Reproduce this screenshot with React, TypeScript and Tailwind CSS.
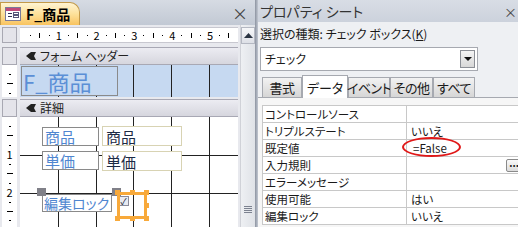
import React from "react";

const jp = "font-['Noto_Sans_CJK_JP','Noto_Sans',sans-serif] [font-feature-settings:'palt']";
const CM = 37.8;
const ORIGIN = 21;

function FormIcon() {
  return (
    <svg width="16" height="14" viewBox="0 0 16 14">
      <rect x="0.5" y="0.5" width="15" height="13" fill="#fff" stroke="#7a7a9a" />
      <rect x="1" y="1" width="14" height="3" fill="#c04a7a" />
      <line x1="3" y1="6.5" x2="7" y2="6.5" stroke="#335" />
      <line x1="3" y1="9.5" x2="7" y2="9.5" stroke="#335" />
      <rect x="8.5" y="5.5" width="5" height="2" fill="none" stroke="#557" />
      <rect x="8.5" y="8.5" width="5" height="2" fill="none" stroke="#557" />
    </svg>
  );
}

function BandIcon() {
  return (
    <svg width="12" height="10" viewBox="0 0 12 10">
      <path d="M1 5 L6 1 L11 1 L9 5 L11 9 L6 9 Z" fill="#222" />
    </svg>
  );
}

function HRuler() {
  const ticks = [];
  for (let i = 1; i < 24; i++) {
    const x = ORIGIN + i * (CM / 4) - 20;
    const q = i % 4;
    ticks.push(
      <div
        key={i}
        className="absolute top-0 flex h-full items-center justify-center"
        style={{ left: x - 6, width: 12 }}
      >
        {q === 0 ? (
          <span className="text-[11px] leading-none text-black">{i / 4}</span>
        ) : q === 2 ? (
          <span className="h-[5px] w-px bg-black" />
        ) : (
          <span className="h-px w-px bg-black" />
        )}
      </div>
    );
  }
  return <div className="relative h-full flex-1 overflow-hidden bg-white">{ticks}</div>;
}

function VTicks({ count }: { count: number }) {
  const marks = [];
  for (let i = 1; i <= count; i++) {
    const y = i * (CM / 4);
    const q = i % 4;
    marks.push(
      <div
        key={i}
        className="absolute left-0 flex w-full items-center justify-center"
        style={{ top: y - 6, height: 12 }}
      >
        {q === 0 ? (
          <span className="text-[11px] leading-none text-black">{i / 4}</span>
        ) : q === 2 ? (
          <span className="h-px w-[6px] bg-black" />
        ) : (
          <span className="h-px w-[2px] bg-black" />
        )}
      </div>
    );
  }
  return <>{marks}</>;
}

function Band({ label }: { label: string }) {
  return (
    <div className="flex h-[18px] items-center gap-[3px] border-y border-[#a8a8b4] bg-gradient-to-b from-[#ececf2] to-[#d6d6de] pl-[5px] text-[12px] leading-none text-[#222]">
      <BandIcon />
      <span>{label}</span>
    </div>
  );
}

function VGrid() {
  return (
    <>
      {[1, 2, 3, 4, 5].map((k) => (
        <div
          key={k}
          className="absolute top-0 h-full w-px bg-[#222]"
          style={{ left: Math.round(k * CM) }}
        />
      ))}
    </>
  );
}

function Handle({ x, y, cls }: { x: number; y: number; cls: string }) {
  return <div className={`absolute ${cls}`} style={{ left: x, top: y }} />;
}

function Designer() {
  return (
    <div className={`flex h-full w-[255px] flex-col bg-[#e8e9ee] ${jp}`}>
      {/* doc tab bar */}
      <div className="flex h-[25px] items-end bg-gradient-to-b from-[#d6dbe3] to-[#c2c9d4] pt-[2px]">
        <div className="flex h-[23px] w-[80px] items-center gap-[5px] rounded-tr-[10px] border border-b-0 border-[#c39a4a] bg-gradient-to-b from-[#fff4d2] via-[#fde19a] to-[#f8c35e] pl-[4px]">
          <FormIcon />
          <span className="text-[14px] font-bold leading-none text-black">F_商品</span>
        </div>
        <div className="flex-1" />
        <span className="mb-[4px] mr-[7px] text-[16px] leading-none text-[#444]">×</span>
      </div>
      <div className="flex min-h-0 flex-1">
        <div className="flex min-w-0 flex-1 flex-col pt-[2px]">
          {/* ruler row */}
          <div className="flex h-[17px] gap-[3px] pl-[2px]">
            <div className="h-[16px] w-[15px] border border-[#a8a8b2] bg-[#e4e4ea]" />
            <div className="h-[16px] flex-1 border-y border-[#c8c8d0]">
              <HRuler />
            </div>
          </div>
          <div className="flex min-h-0 flex-1 gap-[3px] pl-[2px] pt-[3px]">
            {/* vertical ruler */}
            <div className="flex w-[15px] flex-col">
              <div className="h-[18px] border border-[#a8a8b2] bg-[#e4e4ea]" />
              <div className="relative h-[32px] bg-white">
                <VTicks count={3} />
              </div>
              <div className="mt-[2px] h-[18px] border border-[#a8a8b2] bg-[#e4e4ea]" />
              <div className="relative flex-1 overflow-hidden bg-white">
                <VTicks count={11} />
              </div>
            </div>
            {/* canvas */}
            <div className="flex min-w-0 flex-1 flex-col">
              <Band label="フォーム ヘッダー" />
              <div className="relative h-[32px] bg-[#c6d9f1]">
                <VGrid />
                <div className="absolute left-[1px] top-[1px] flex h-[30px] w-[97px] items-center whitespace-nowrap border border-[#8a8a8a] bg-[#c6d9f1] pl-[1px] text-[22px] leading-[22px] text-[#5b8fd6]">
                  F_商品
                </div>
              </div>
              <div className="h-[2px]" />
              <Band label="詳細" />
              <div className="relative flex-1 overflow-hidden bg-white">
                <VGrid />
                <div className="absolute left-0 h-px w-full bg-[#222]" style={{ top: 38 }} />
                <div className="absolute left-0 h-px w-full bg-[#222]" style={{ top: 76 }} />
                {/* 商品 */}
                <div className="absolute left-[22px] top-[10px] flex h-[19px] w-[57px] items-center border border-[#8a8a8a] bg-white pl-[2px] text-[15px] leading-none text-[#4f86d0]">
                  商品
                </div>
                <div className="absolute left-[82px] top-[9px] flex h-[20px] w-[80px] items-center border border-[#d8d3b3] bg-white pl-[3px] text-[15px] leading-none text-[#1c2a44]">
                  商品
                </div>
                {/* 単価 */}
                <div className="absolute left-[22px] top-[34px] flex h-[19px] w-[57px] items-center border border-[#8a8a8a] bg-white pl-[2px] text-[15px] leading-none text-[#4f86d0]">
                  単価
                </div>
                <div className="absolute left-[82px] top-[34px] flex h-[20px] w-[80px] items-center border border-[#d8d3b3] bg-white pl-[3px] text-[15px] leading-none text-[#1c2a44]">
                  単価
                </div>
                {/* 編集ロック */}
                <div className="absolute left-[22px] top-[77px] flex h-[18px] w-[70px] items-center overflow-hidden whitespace-nowrap border border-[#8a8a8a] bg-white pl-[1px] text-[14px] leading-none text-[#4f86d0]">
                  編集ロック
                </div>
                <Handle x={17} y={71} cls="h-[8px] w-[9px] bg-[#808088]" />
                <Handle x={92} y={71} cls="h-[8px] w-[9px] bg-[#808088]" />
                <div className="absolute left-[98px] top-[79px] flex h-[10px] w-[11px] items-center justify-center border border-[#8a8a9a] bg-[#e8eaf2] text-[9px] leading-none text-[#223]">
                  ✓
                </div>
                <div className="absolute left-[97px] top-[75px] h-[27px] w-[30px] border-[3px] border-[#f8a93a]" />
                <Handle x={95} y={73} cls="h-[5px] w-[5px] bg-[#f8a93a]" />
                <Handle x={110} y={73} cls="h-[5px] w-[5px] bg-[#f8a93a]" />
                <Handle x={124} y={73} cls="h-[5px] w-[5px] bg-[#f8a93a]" />
                <Handle x={124} y={86} cls="h-[5px] w-[5px] bg-[#f8a93a]" />
                <Handle x={95} y={99} cls="h-[5px] w-[5px] bg-[#f8a93a]" />
                <Handle x={110} y={99} cls="h-[5px] w-[5px] bg-[#f8a93a]" />
                <Handle x={124} y={99} cls="h-[5px] w-[5px] bg-[#f8a93a]" />
              </div>
            </div>
          </div>
        </div>
        {/* scrollbar */}
        <div className="ml-[2px] flex w-[15px] flex-col border-l border-[#d0d2d8] bg-gradient-to-r from-[#eef0f3] to-[#dfe2e7] pt-[2px]">
          <div className="flex h-[17px] items-center justify-center border border-[#b4b8c2] bg-gradient-to-b from-[#f6f7f9] to-[#dde0e6]">
            <svg width="9" height="5" viewBox="0 0 9 5">
              <path d="M0 5 L4.5 0 L9 5 Z" fill="#2a3442" />
            </svg>
          </div>
          <div className="flex-1" />
          <div className="mb-[14px] flex flex-col items-center gap-[1px]">
            <span className="h-px w-[8px] bg-[#7c8290]" />
            <span className="h-px w-[8px] bg-[#7c8290]" />
            <span className="h-px w-[8px] bg-[#7c8290]" />
            <span className="h-px w-[8px] bg-[#7c8290]" />
          </div>
        </div>
      </div>
    </div>
  );
}

const props: [string, string, boolean?][] = [
  ["コントロールソース", ""],
  ["トリプルステート", "いいえ"],
  ["既定値", "=False", true],
  ["入力規則", ""],
  ["エラーメッセージ", ""],
  ["使用可能", "はい"],
  ["編集ロック", "いいえ"],
];

const tabs: [string, number][] = [
  ["書式", 40],
  ["データ", 46],
  ["イベント", 42],
  ["その他", 43],
  ["すべて", 42],
];

function PropertySheet() {
  return (
    <div className={`flex h-full min-w-0 flex-1 flex-col bg-[#eef0f3] ${jp} text-[12px] leading-none text-[#1a1a1a]`}>
      <div className="flex h-[22px] shrink-0 items-center justify-between bg-gradient-to-b from-[#d8dde5] to-[#ccd2dc] pl-[2px] text-[14px] text-[#333]">
        <span>プロパティ シート</span>
        <span className="pr-[1px] text-[13px] text-[#444]">×</span>
      </div>
      <div className="whitespace-nowrap pl-[2px] pt-[6px] text-[12px]">
        選択の種類: チェック ボックス(<span className="underline">K</span>)
      </div>
      <div className="ml-[2px] mt-[7px] flex h-[24px] w-[218px] items-center justify-between border border-[#a6a9b0] bg-white pl-[4px] pr-[2px]">
        <span>チェック</span>
        <div className="flex h-[18px] w-[15px] items-center justify-center border border-[#8c8f96] bg-gradient-to-b from-[#f4f4f4] to-[#d8d8d8]">
          <svg width="8" height="4" viewBox="0 0 8 4">
            <path d="M0 0 L8 0 L4 4 Z" fill="#111" />
          </svg>
        </div>
      </div>
      <div className="mt-[4px] flex h-[23px] items-end border-b border-[#a6a9b0] pl-[4px]">
        {tabs.map(([t, w], i) =>
          i === 1 ? (
            <div
              key={t}
              className="-mb-px flex h-[23px] items-center justify-center whitespace-nowrap border border-b-0 border-[#a6a9b0] bg-white text-[13px]"
              style={{ width: w }}
            >
              {t}
            </div>
          ) : (
            <div
              key={t}
              className="flex h-[20px] items-center justify-center whitespace-nowrap border border-b-0 border-[#a6a9b0] bg-gradient-to-b from-[#f2f2f2] to-[#d6d6d6] text-[13px] tracking-[-0.5px]"
              style={{ width: w }}
            >
              {t}
            </div>
          )
        )}
      </div>
      <div className="flex-1 bg-[#f6f6f6] pl-[4px] pt-[7px]">
        <div className="border-l border-t border-[#c8c8c8] bg-white">
          {props.map(([k, v, circled]) => (
            <div key={k} className="flex h-[17px] border-b border-[#c8c8c8]">
              <div className="flex w-[144px] items-center whitespace-nowrap border-r border-[#c8c8c8] pl-[2px] text-[11.5px] leading-[15px]">
                {k}
              </div>
              <div className="relative flex flex-1 items-center pl-[4px] text-[11.5px] leading-[15px]">
                {circled ? (
                  <>
                    <span className="pl-[2px]">{v}</span>
                    <div className="absolute left-[-5px] top-[-3px] h-[20px] w-[59px] rounded-[50%] border-2 border-[#e01818]" />
                  </>
                ) : (
                  v
                )}
                {k === "入力規則" && (
                  <div className="absolute right-[-4px] top-[2px] flex h-[13px] w-[16px] items-start justify-center rounded-[2px] border border-[#8a8a8a] bg-gradient-to-b from-[#fafafa] to-[#dcdcdc] text-[10px] font-bold leading-[6px]">
                    ...
                  </div>
                )}
              </div>
            </div>
          ))}
        </div>
      </div>
    </div>
  );
}

export default function App() {
  return (
    <div className="flex h-[227px] w-[518px] overflow-hidden bg-[#c8ced8]">
      <Designer />
      <div className="w-[3px] bg-gradient-to-r from-[#8c93a0] to-[#c2c8d2]" />
      <PropertySheet />
    </div>
  );
}
